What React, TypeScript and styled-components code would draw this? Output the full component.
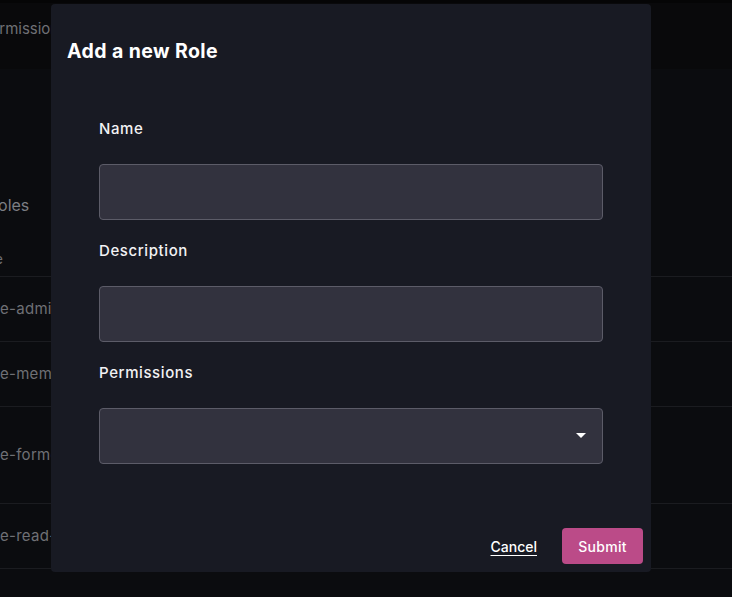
import React from "react";
import styled, { createGlobalStyle } from "styled-components";

const Global = createGlobalStyle`
  html, body { margin: 0; padding: 0; background: #0b0c0f; }
  body { font-family: Inter, "Noto Sans", sans-serif; overflow: hidden; }
  * { box-sizing: border-box; }
`;

const Page = styled.div`
  width: 732px;
  height: 597px;
  background: #0b0c0f;
  padding-top: 3px;
  position: relative;
  overflow: hidden;
  box-shadow: inset 0 3px 0 #050506;
`;

const TopBar = styled.header`
  height: 66px;
  background: #09090b;
  display: flex;
  align-items: center;
  padding-bottom: 16px;
`;

const BarLink = styled.span`
  margin-left: -19px;
  font-size: 15px;
  color: #6f7075;
  white-space: nowrap;
`;

const Content = styled.main`
  display: flex;
  flex-direction: column;
`;

const Heading = styled.h2`
  margin: 124px 0 0 -12px;
  font-size: 16px;
  font-weight: 400;
  line-height: 24px;
  color: #7c7e83;
`;

const Table = styled.div`
  margin-top: 26px;
  display: flex;
  flex-direction: column;
`;

const HeadRow = styled.div`
  height: 34px;
  display: flex;
  align-items: center;
  padding-bottom: 2px;
  border-bottom: 1px solid #1b1c20;
`;

const HeadCell = styled.span`
  margin-left: -36px;
  font-size: 14px;
  color: #6f7075;
`;

const Row = styled.div<{ $h: number }>`
  height: ${(p) => p.$h}px;
  display: flex;
  align-items: center;
  padding-bottom: 2px;
  border-bottom: 1px solid #1b1c20;
`;

const Cell = styled.span`
  margin-left: -19px;
  font-size: 15px;
  letter-spacing: 0.3px;
  color: #6f7075;
  white-space: nowrap;
`;

const Modal = styled.div`
  position: absolute;
  left: 51px;
  top: 4px;
  width: 600px;
  height: 568px;
  background: #181a23;
  border-radius: 4px;
  display: flex;
  flex-direction: column;
`;

const Title = styled.h1`
  margin: 0;
  padding: 35px 16px 0;
  font-size: 19.5px;
  line-height: 24px;
  font-weight: 700;
  letter-spacing: 0.4px;
  color: #ffffff;
`;

const Form = styled.div`
  padding: 56px 48px 0;
  display: flex;
  flex-direction: column;
`;

const Label = styled.label<{ $first?: boolean }>`
  display: block;
  margin-top: ${(p) => (p.$first ? 0 : 21)}px;
  margin-bottom: 25px;
  font-size: 15px;
  line-height: 20px;
  font-weight: 500;
  letter-spacing: 0.6px;
  color: #f2f2f4;
`;

const Input = styled.div`
  height: 56px;
  background: #32323e;
  border: 1px solid #5c5c68;
  border-radius: 4px;
  display: flex;
  align-items: center;
  justify-content: flex-end;
  padding-right: 16px;
`;

const Footer = styled.div`
  margin-top: auto;
  padding: 8px;
  display: flex;
  justify-content: flex-end;
  align-items: center;
  gap: 25px;
`;

const Cancel = styled.span`
  font-size: 14px;
  font-weight: 500;
  color: #ffffff;
  text-decoration: underline;
  text-underline-offset: 3px;
`;

const Submit = styled.button`
  width: 81px;
  height: 36px;
  border: 0;
  border-radius: 4px;
  background: #bb4b88;
  color: #ffffff;
  font-family: Inter, "Noto Sans", sans-serif;
  font-size: 14px;
  font-weight: 500;
  letter-spacing: 0.3px;
`;

export default function App() {
  return (
    <>
      <Global />
      <Page>
        <TopBar>
          <BarLink>Permissions</BarLink>
        </TopBar>
        <Content>
          <Heading>Roles</Heading>
          <Table>
            <HeadRow>
              <HeadCell>Name</HeadCell>
            </HeadRow>
            <Row $h={65}><Cell>role-admin</Cell></Row>
            <Row $h={65}><Cell>role-member</Cell></Row>
            <Row $h={97}><Cell>role-former</Cell></Row>
            <Row $h={65}><Cell>role-read-only</Cell></Row>
          </Table>
        </Content>
        <Modal>
          <Title>Add a new Role</Title>
          <Form>
            <Label $first>Name</Label>
            <Input />
            <Label>Description</Label>
            <Input />
            <Label>Permissions</Label>
            <Input>
              <svg width="10" height="6" viewBox="0 0 10 6">
                <path d="M0 0 L10 0 L5 5 Z" fill="#ffffff" />
              </svg>
            </Input>
          </Form>
          <Footer>
            <Cancel>Cancel</Cancel>
            <Submit>Submit</Submit>
          </Footer>
        </Modal>
      </Page>
    </>
  );
}
